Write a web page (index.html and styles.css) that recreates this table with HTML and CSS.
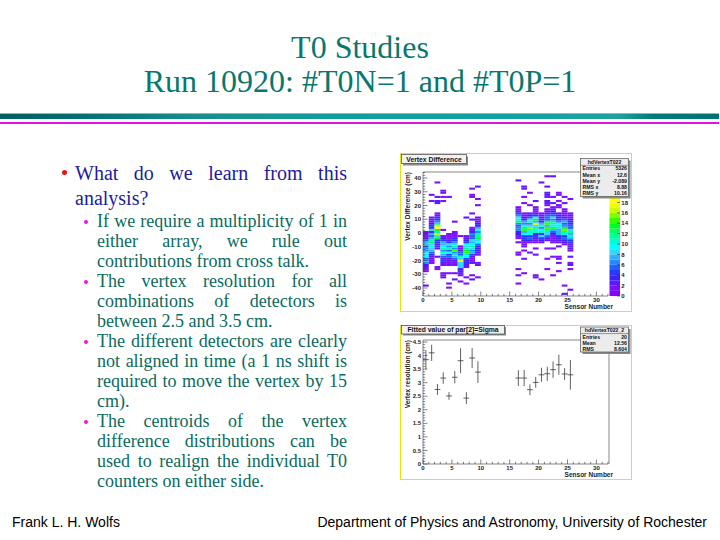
FILE: index.html
```html
<!DOCTYPE html>
<html lang="en">
<head>
<meta charset="utf-8">
<title>T0 Studies</title>
<link rel="stylesheet" href="styles.css">
</head>
<body>
<div class="slide">
  <header class="title">
    <div>T0 Studies</div>
    <div>Run 10920: #T0N=1 and #T0P=1</div>
  </header>
  <div class="rule">
    <div class="band"></div>
    <div class="pinkline"></div>
  </div>
  <main class="content">
    <ul class="bullets">
      <li class="item">
        <span class="dot red"></span>
        <div class="body">
          <p class="lead">What do we learn from this analysis?</p>
          <ul class="sub">
            <li class="subitem"><span class="dot mag"></span><p>If we require a multiplicity of 1 in either array, we rule out contributions from cross talk.</p></li>
            <li class="subitem"><span class="dot mag"></span><p>The vertex resolution for all combinations of detectors is between 2.5 and 3.5 cm.</p></li>
            <li class="subitem"><span class="dot mag"></span><p>The different detectors are clearly not aligned in time (a 1 ns shift is required to move the vertex by 15 cm).</p></li>
            <li class="subitem"><span class="dot mag"></span><p>The centroids of the vertex difference distributions can be used to realign the individual T0 counters on either side.</p></li>
          </ul>
        </div>
      </li>
    </ul>
    <div class="plots">
      <svg class="plot" width="232" height="159" viewBox="400 153 232 159">
        <rect x="400.5" y="153.5" width="231" height="158" class="canvas"/>
        <g id="hist"></g>
        <path class="frame" d="M423 296V172H608M423 296H608"/>
        <g id="axes1"></g>
        <g id="cbar"></g>
        <text class="axtitle" transform="translate(410 172) rotate(-90)" text-anchor="end">Vertex Difference (cm)</text>
        <text class="axtitle" x="613" y="309.3" text-anchor="end">Sensor Number</text>
        <rect x="403" y="156.5" width="65" height="9" class="tshadow"/>
        <rect x="401.5" y="154.5" width="65" height="9" class="tbox"/>
        <text class="ttl" x="434" y="161.6" text-anchor="middle">Vertex Difference</text>
        <rect x="582.5" y="160.5" width="48" height="38" class="tshadow"/>
        <rect x="580.5" y="158.5" width="48" height="38" class="sbox"/>
        <line x1="580.5" y1="165.3" x2="628.5" y2="165.3" class="sline"/>
        <text class="stxt" x="604.5" y="163.8" text-anchor="middle">hdVertexT022</text>
        <text class="stxt" x="582.5" y="170.4">Entries</text><text class="stxt" x="627" y="170.4" text-anchor="end">5326</text>
        <text class="stxt" x="582.5" y="176.5">Mean x</text><text class="stxt" x="627" y="176.5" text-anchor="end">12.6</text>
        <text class="stxt" x="582.5" y="182.6">Mean y</text><text class="stxt" x="627" y="182.6" text-anchor="end">-2.089</text>
        <text class="stxt" x="582.5" y="188.7">RMS x</text><text class="stxt" x="627" y="188.7" text-anchor="end">8.88</text>
        <text class="stxt" x="582.5" y="194.8">RMS y</text><text class="stxt" x="627" y="194.8" text-anchor="end">10.16</text>
      </svg>
      <svg class="plot" width="232" height="155" viewBox="400 325 232 155">
        <rect x="400.5" y="325.5" width="231" height="154" class="canvas"/>
        <rect x="608" y="340" width="2" height="124" class="rightedge"/>
        <path class="frame" d="M423 464V340H608M423 464H608"/>
        <g id="axes2"></g>
        <g id="points"></g>
        <text class="axtitle" transform="translate(410 340) rotate(-90)" text-anchor="end">Vertex resolution (cm)</text>
        <text class="axtitle" x="613" y="477.4" text-anchor="end">Sensor Number</text>
        <rect x="403" y="327" width="103" height="8.5" class="tshadow"/>
        <rect x="401.5" y="325.5" width="103" height="8.5" class="tbox"/>
        <text class="ttl" x="453" y="332.3" text-anchor="middle">Fitted value of par[2]=Sigma</text>
        <rect x="582.5" y="329" width="48" height="25" class="tshadow"/>
        <rect x="580.5" y="327" width="48" height="25" class="sbox"/>
        <line x1="580.5" y1="333.6" x2="628.5" y2="333.6" class="sline"/>
        <text class="stxt" x="604.5" y="332.2" text-anchor="middle">hdVertexT022_2</text>
        <text class="stxt" x="582.5" y="338.8">Entries</text><text class="stxt" x="627" y="338.8" text-anchor="end">20</text>
        <text class="stxt" x="582.5" y="344.8">Mean</text><text class="stxt" x="627" y="344.8" text-anchor="end">12.56</text>
        <text class="stxt" x="582.5" y="350.8">RMS</text><text class="stxt" x="627" y="350.8" text-anchor="end">8.604</text>
      </svg>
    </div>
  </main>
  <footer class="foot">
    <span>Frank L. H. Wolfs</span>
    <span>Department of Physics and Astronomy, University of Rochester</span>
  </footer>
</div>
<script src="script.js"></script>
</body>
</html>
```

FILE: styles.css
```css
html, body {
  margin: 0;
  padding: 0;
  background: #ffffff;
}

.slide {
  width: 720px;
  height: 540px;
  display: flex;
  flex-direction: column;
  font-family: "Liberation Serif", "Times New Roman", serif;
  overflow: hidden;
}

.title {
  padding-top: 30px;
  text-align: center;
  font-size: 32px;
  line-height: 34px;
  color: #08786c;
}

.rule {
  margin-top: 15px;
}

.band {
  height: 5px;
  margin-right: 1px;
  border-top: 1px solid #9db3b3;
  background: linear-gradient(90deg, #005e5e 0%, #006e6e 10%, #1a8e8e 28%, #129c9c 45%, #0fa2a2 70%, #22a0a0 86%, #007a7a 91%, #007272 100%);
}

.pinkline {
  height: 2px;
  margin-top: 3px;
  margin-right: 1px;
  background: #dc14dc;
}

.content {
  display: flex;
  margin-top: 29px;
}

.bullets {
  list-style: none;
  margin: 0;
  padding: 8px 0 0 62px;
  width: 285px;
}

.item {
  display: flex;
}

.dot {
  flex: none;
  width: 4px;
  height: 4px;
  border-radius: 50%;
  margin-top: 9px;
  margin-right: 9px;
}

.dot.red {
  width: 5px;
  height: 5px;
  margin-top: 8.5px;
  margin-right: 8px;
  background: #e81414;
}

.dot.mag {
  background: #ec14ec;
}

.body {
  flex: 1;
  min-width: 0;
}

.lead {
  margin: 0;
  font-size: 20px;
  line-height: 25px;
  color: #1c1c9c;
  text-align: justify;
}

.sub {
  list-style: none;
  margin: 0;
  padding: 0 0 0 9px;
}

.subitem {
  display: flex;
  font-size: 18px;
  line-height: 20px;
  color: #0a6b60;
}

.subitem p {
  flex: 1;
  margin: 0;
  text-align: justify;
}

.plots {
  margin-left: 53px;
  display: flex;
  flex-direction: column;
  gap: 13px;
}

.plot {
  display: block;
}

.canvas {
  fill: #ffffff;
  stroke: #e6e600;
  stroke-width: 1;
}

.frame {
  fill: none;
  stroke: #555555;
  stroke-width: 0.7;
}

.rightedge {
  fill: #c4c4c4;
}

.tick {
  fill: none;
  stroke: #333333;
  stroke-width: 0.6;
}

.cbtick {
  fill: none;
  stroke: #222222;
  stroke-width: 0.6;
}

.lbl {
  font: bold 6px "Liberation Sans", Arial, sans-serif;
  fill: #222222;
}

.axtitle {
  font: bold 6.5px "Liberation Sans", Arial, sans-serif;
  fill: #222222;
}

.tshadow {
  fill: #8a8a8a;
}

.tbox {
  fill: #f2f2f2;
  stroke: #555555;
  stroke-width: 0.8;
}

.ttl {
  font: bold 6.8px "Liberation Sans", Arial, sans-serif;
  fill: #111111;
}

.sbox {
  fill: #ececec;
  stroke: #555555;
  stroke-width: 0.7;
}

.sline {
  stroke: #555555;
  stroke-width: 0.6;
}

.stxt {
  font: bold 5.2px "Liberation Sans", Arial, sans-serif;
  fill: #111111;
}

.err {
  fill: none;
  stroke: #3a3a3a;
  stroke-width: 0.8;
}

.foot {
  margin-top: auto;
  display: flex;
  justify-content: space-between;
  padding: 0 13px 10px 12px;
  font-family: "Liberation Sans", Arial, sans-serif;
  font-size: 14px;
  line-height: 16px;
  color: #000000;
}
```

FILE: script.js
```js
(function () {
  var NS = "http://www.w3.org/2000/svg";
  function el(p, tag, a, t) {
    var e = document.createElementNS(NS, tag);
    for (var k in a) e.setAttribute(k, a[k]);
    if (t !== undefined) e.textContent = t;
    p.appendChild(e);
    return e;
  }
  var X0 = 423, XS = 5.78;
  function xp(v) { return X0 + v * XS; }
  var seed = 20240611;
  function rnd() {
    seed = (Math.imul(seed, 1664525) + 1013904223) >>> 0;
    return seed / 4294967296;
  }

  function xAxis(g, yb) {
    var d = "";
    for (var v = 0; v <= 32; v++) {
      var len = v % 5 === 0 ? 4.5 : 2.2;
      d += "M" + xp(v).toFixed(2) + " " + yb + "v" + (-len);
    }
    el(g, "path", { d: d, "class": "tick" });
    for (var w = 0; w <= 30; w += 5) {
      el(g, "text", { x: xp(w).toFixed(2), y: yb + 5.6, "class": "lbl", "text-anchor": "middle" }, String(w));
    }
  }

  function yAxis(g, fy, minI, maxI, step, majorEvery, labelMinI, labelMaxI, fmt) {
    var d = "";
    for (var i = minI; i <= maxI; i++) {
      var v = i * step;
      var maj = (i % majorEvery) === 0;
      d += "M" + X0 + " " + fy(v).toFixed(2) + "h" + (maj ? 4.5 : 2.2);
    }
    el(g, "path", { d: d, "class": "tick" });
    for (var j = labelMinI; j <= labelMaxI; j += majorEvery) {
      var val = j * step;
      el(g, "text", { x: 421, y: (fy(val) + 2.1).toFixed(2), "class": "lbl", "text-anchor": "end" }, fmt(val));
    }
  }

  // ---------- Plot 1 ----------
  var fy1 = function (v) { return 233 - v * 1.375; };
  var axes1 = document.getElementById("axes1");
  xAxis(axes1, 296);
  yAxis(axes1, fy1, -22, 22, 2, 5, -20, 20, function (v) { return String(Math.round(v)); });

  var pal = ["#8a00ff", "#7a10ff", "#5c18ff", "#3c20ff", "#2a38ff", "#2060ff", "#2888ff", "#30b0ff",
             "#30d8ff", "#00ffff", "#00ffd0", "#00ffa0", "#00ff60", "#00ff20", "#30ff00", "#80ff00",
             "#c8ff00", "#f0ff00", "#ffff00"];

  var cols = [[0, -14, 10, 6], [1, -5, 9, 7], [2, 2, 17, 5], [3, -12, 10, 5], [4, -12, 8, 5],
              [5, -12, 11, 5], [6, -20, 13, 4.5], [7, -13, 10, 5], [8, -8, 12, 5], [9, -3, 10, 6],
              [16, 8, 9, 5], [17, 3, 10, 5], [18, 4, 11, 5], [19, 6, 12, 5], [20, 3, 10, 5],
              [21, 5, 11, 5], [22, 7, 10, 5], [23, 4, 9, 5], [24, 3, 12, 5], [25, 1, 9, 6]];
  var hist = document.getElementById("hist");
  var bw = 1.5;
  for (var c = 0; c < cols.length; c++) {
    var s = cols[c][0], mu = cols[c][1], A = cols[c][2], sg = cols[c][3];
    for (var b = 0; b < 60; b++) {
      var lo = -45 + b * bw, ctr = lo + bw / 2;
      var z = (ctr - mu) / sg;
      var e = A * Math.exp(-0.5 * z * z);
      var n = Math.round(e * (0.55 + 0.9 * rnd()));
      if (n < 1) {
        var dist = Math.abs(ctr - mu);
        var p = dist < 25 ? 0.2 : (dist < 40 ? 0.1 : 0.03);
        if (rnd() < p) n = 1 + (rnd() < 0.3 ? 1 : 0);
      }
      if (n <= 0) continue;
      if (n > 18) n = 18;
      el(hist, "rect", {
        x: xp(s).toFixed(2), y: fy1(lo + bw).toFixed(2),
        width: XS.toFixed(2), height: (bw * 1.375).toFixed(3), fill: pal[n]
      });
    }
  }

  // colour bar
  var cbar = document.getElementById("cbar");
  var ch = 5.2;
  for (var k = 0; k < 19; k++) {
    el(cbar, "rect", { x: 609.5, y: (296 - (k + 1) * ch).toFixed(2), width: 10.5, height: (ch + 0.05).toFixed(2), fill: pal[k] });
  }
  var cd = "";
  for (var t = 0; t <= 18; t += 2) {
    cd += "M620 " + (296 - t * ch).toFixed(2) + "h-3";
  }
  el(cbar, "path", { d: cd, "class": "cbtick" });
  for (var t2 = 0; t2 <= 18; t2 += 2) {
    el(cbar, "text", { x: 621.3, y: (296 - t2 * ch + 2.1).toFixed(2), "class": "lbl" }, String(t2));
  }

  // ---------- Plot 2 ----------
  var fy2 = function (v) { return 464 - v * 27.11; };
  var axes2 = document.getElementById("axes2");
  xAxis(axes2, 464);
  yAxis(axes2, fy2, 0, 45, 0.1, 5, 0, 45, function (v) {
    var r = Math.round(v * 10) / 10;
    return String(r);
  });

  var pts = [[0, 3.85, 0.35], [1, 4.1, 0.3], [2, 2.75, 0.2], [3, 3.17, 0.21], [4, 2.51, 0.14],
             [5, 3.2, 0.23], [6, 3.81, 0.46], [7, 2.43, 0.22], [8, 3.91, 0.37], [9, 3.39, 0.4],
             [16, 3.17, 0.29], [17, 3.17, 0.3], [18, 2.74, 0.2], [19, 3.01, 0.2], [20, 3.29, 0.26],
             [21, 3.33, 0.26], [22, 3.48, 0.3], [23, 3.66, 0.37], [24, 3.32, 0.22], [25, 3.29, 0.55]];
  var pg = document.getElementById("points");
  var pd = "";
  for (var q = 0; q < pts.length; q++) {
    var sx = pts[q][0], yv = pts[q][1], er = pts[q][2];
    var yc = fy2(yv).toFixed(2);
    pd += "M" + xp(sx).toFixed(2) + " " + yc + "H" + xp(sx + 1).toFixed(2);
    var xm = xp(sx + 0.5).toFixed(2);
    pd += "M" + xm + " " + fy2(yv + er).toFixed(2) + "V" + fy2(yv - er).toFixed(2);
  }
  el(pg, "path", { d: pd, "class": "err" });
})();
```
